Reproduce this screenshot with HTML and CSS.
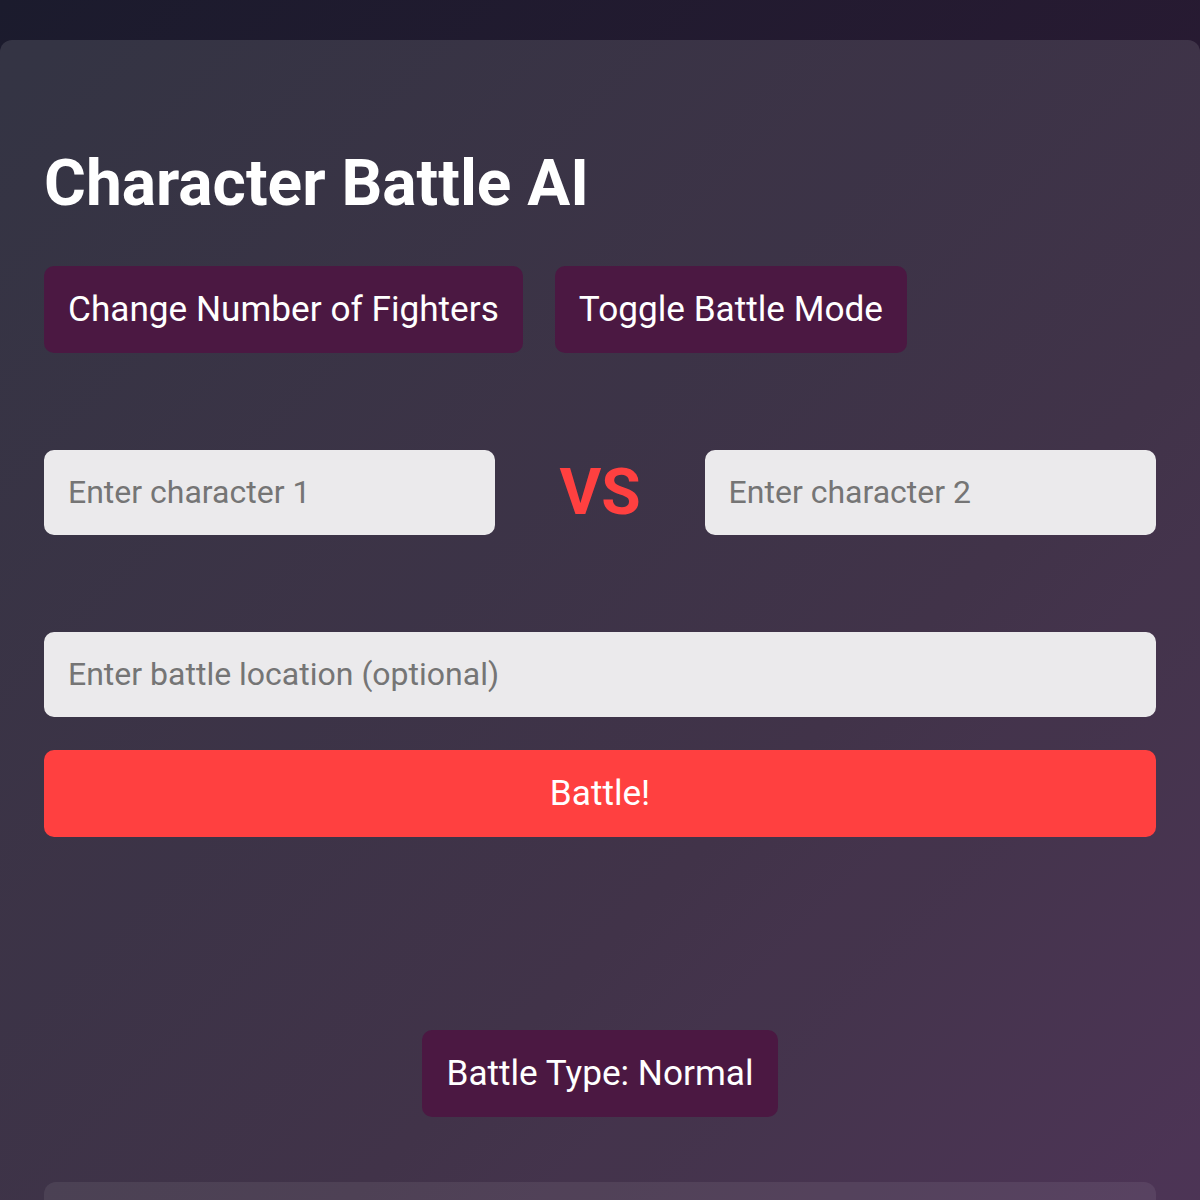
FILE: index.html
```html
<!DOCTYPE html>
<html>
    <head>
        <title>Character Battle AI</title>
        <meta name="viewport" content="width=device-width, initial-scale=1">
        <link rel="stylesheet" href="styles.css">
    </head>
    <body>
        <div class="container">
            <h1>Character Battle AI</h1>
            <div class="controls">
                <button class="btn">Change Number of Fighters</button>
                <button class="btn">Toggle Battle Mode</button>
            </div>
            <div class="fighters">
                <input type="text" placeholder="Enter character 1">
                <span class="vs">VS</span>
                <input type="text" placeholder="Enter character 2">
            </div>
            <input type="text" class="location" placeholder="Enter battle location (optional)">
            <button class="battle">Battle!</button>
            <div class="type-row">
                <button class="btn">Battle Type: Normal</button>
            </div>
            <div class="result"></div>
        </div>
    </body>
</html>
```

FILE: styles.css
```css
* { box-sizing: border-box; font-family: Roboto, "Liberation Sans", sans-serif; }
html { background: #1c1b2e; }
body { margin: 0; padding-top: 40px; min-height: 1200px; background: linear-gradient(135deg, #1b1b2d 0%, #2a1a33 60%, #3a1d44 100%); }
.container { background: rgba(255, 255, 255, 0.11); border-radius: 12px 12px 0 0; padding: 106px 44px 0; min-height: 1160px; }
h1 { margin: 0; color: #fff; font-size: 4rem; font-weight: 700; line-height: 75px; }
.controls { display: flex; gap: 32px; margin-top: 45px; }
.btn { background: #4b1842; color: #fff; border: none; border-radius: 10px; font-size: 2.2rem; padding: 23px 24px; line-height: 41px; cursor: pointer; }
.fighters { display: grid; grid-template-columns: 1fr auto 1fr; gap: 64px; align-items: center; margin-top: 97px; }
input { width: 100%; background: #ebeaec; border: 2px solid #ebeaec; border-radius: 10px; font-size: 2rem; padding: 22px 22px; line-height: 37px; color: #333; outline: none; }
input::placeholder { color: #757575; }
.vs { color: #ff4040; font-size: 4rem; font-weight: 700; line-height: 75px; }
.location { display: block; margin-top: 97px; }
.battle { display: block; width: 100%; margin-top: 33px; background: #ff4040; color: #fff; border: none; border-radius: 10px; font-size: 2.2rem; padding: 23px; line-height: 41px; cursor: pointer; }
.type-row { display: flex; justify-content: center; margin-top: 193px; }
.result { margin-top: 65px; height: 200px; background: rgba(255, 255, 255, 0.07); border-radius: 12px; }
```
